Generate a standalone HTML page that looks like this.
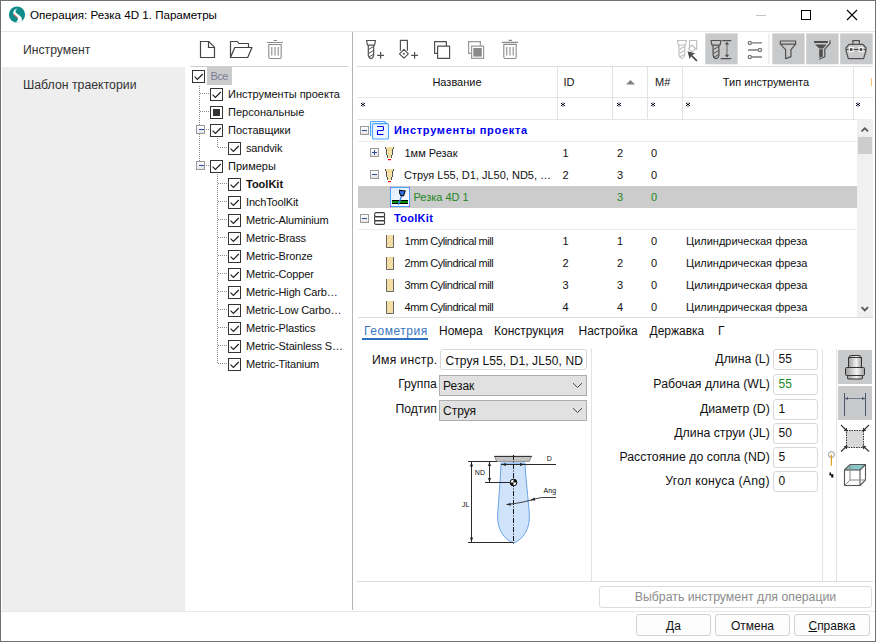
<!DOCTYPE html>
<html><head><meta charset="utf-8">
<style>
*{box-sizing:border-box;margin:0;padding:0}
html,body{width:876px;height:642px;overflow:hidden;background:#fff}
body{position:relative;font-family:"Liberation Sans",sans-serif;color:#000;font-size:11px}
.a{position:absolute}
.t{position:absolute;white-space:nowrap;line-height:1}
.hl{position:absolute;height:1px}
.vl{position:absolute;width:1px}
.cb{width:13px;height:13px;border:1px solid #333;background:#fff}
.dh{height:1px;background-image:linear-gradient(to right,#8a8a8a 50%,transparent 50%);background-size:2px 1px}
.dv{width:1px;background-image:linear-gradient(to bottom,#8a8a8a 50%,transparent 50%);background-size:1px 2px}
.ex{width:9px;height:9px;border:1px solid #9a9a9a;background:linear-gradient(#fff,#e4e4e4)}
</style></head><body>
<!-- window border -->
<div class="a" style="left:0;top:0;width:876px;height:642px;border:1px solid #707070;z-index:50;pointer-events:none"></div>

<!-- title bar -->
<svg class="a" style="left:6px;top:4px" width="22" height="22" viewBox="6 4 22 22">
  <defs><clipPath id="lc"><circle cx="17" cy="14.6" r="8.1"/></clipPath></defs>
  <circle cx="17" cy="14.6" r="8.1" fill="#108c88"/>
  <g clip-path="url(#lc)">
  <path d="M17.6 8.6 C14.6 9.2 12.6 11.4 13.4 13.9 L17.4 17.4 C18.6 18.8 17.6 21.2 14.2 24 L20.5 24 C22.6 21.2 22.6 17.6 19.6 15.4 L16.3 13.1 C15 12 15.2 10.2 17.6 8.6Z" fill="#fff"/>
  <path d="M13.3 13.6 L17.7 17.6 L17.3 18.6 L13.1 14.8Z" fill="#e45a5a"/>
  </g>
</svg>
<div class="t" style="left:30px;top:9px;font-size:11.6px;color:#000">Операция: Резка 4D 1. Параметры</div>
<div class="hl" style="left:1px;top:31px;width:874px;background:#e6e6e6"></div>
<!-- min max close -->
<div class="a" style="left:756px;top:15px;width:10px;height:1px;background:#c4c4c4"></div>
<div class="a" style="left:801px;top:10px;width:10px;height:10px;border:1px solid #000"></div>
<svg class="a" style="left:846px;top:9px" width="12" height="12" viewBox="0 0 12 12"><path d="M1 1L11 11M11 1L1 11" stroke="#000" stroke-width="1.1"/></svg>

<!-- left nav -->
<div class="a" style="left:2px;top:67px;width:183px;height:545px;background:#eeeeee"></div>
<div class="t" style="left:23px;top:44px;font-size:12.2px;color:#333">Инструмент</div>
<div class="t" style="left:23px;top:79px;font-size:12.3px;color:#333">Шаблон траектории</div>

<!-- splitter -->
<div class="vl" style="left:352px;top:32px;height:578px;background:#b4b4b4"></div>
<div class="hl" style="left:1px;top:611px;width:874px;background:#e8e8e8"></div>

<svg class="a" style="left:195px;top:36px" width="95" height="26" viewBox="195 36 95 26">
<path d="M200.5 41.5 H208.8 L214.5 47.2 V57.5 H200.5Z M208.5 41.5 V47.5 H214.5" fill="none" stroke="#444" stroke-width="1.2"/>
<path d="M230.5 57.5 V41.5 H237.3 L238.8 43.5 H248.5 V47.5 M230.5 57.5 L234.8 47.5 H252 L247.7 57.5Z" fill="none" stroke="#444" stroke-width="1.2" stroke-linejoin="round"/>
<path d="M267 42.5 H283 M273.5 40.5 H277 M268.8 44.5 H281.2 V57 Q281.2 58.5 279.8 58.5 H270.2 Q268.8 58.5 268.8 57Z M271.8 47 V55.5 M275 47 V55.5 M278.2 47 V55.5" fill="none" stroke="#8a8a8a" stroke-width="1.1"/>
</svg>
<div class="hl" style="left:190px;top:66px;width:158px;background:#cfcfcf"></div>
<div class="a dv" style="left:199px;top:86px;height:80px"></div>
<div class="a dv" style="left:217px;top:138px;height:10px"></div>
<div class="a dv" style="left:217px;top:174px;height:190px"></div>
<div class="a" style="left:207px;top:67px;width:25px;height:18px;background:#cccccc"></div>
<div class="a cb" style="left:192px;top:70px"><svg width="13" height="13" viewBox="0 0 13 13" style="position:absolute;left:-1px;top:-1px"><path d="M2.6 6.6 L5.4 9.4 L10.8 4" fill="none" stroke="#222" stroke-width="1.2"/></svg></div>
<div class="t" style="left:210.5px;top:71px;color:#7d7d96;letter-spacing:-0.6px">Все</div>
<div class="a dh" style="left:200px;top:93px;width:10px"></div>
<div class="a cb" style="left:210px;top:88px"><svg width="13" height="13" viewBox="0 0 13 13" style="position:absolute;left:-1px;top:-1px"><path d="M2.6 6.6 L5.4 9.4 L10.8 4" fill="none" stroke="#222" stroke-width="1.2"/></svg></div>
<div class="t" style="left:228px;top:89px;color:#111">Инструменты проекта</div>
<div class="a dh" style="left:200px;top:111px;width:10px"></div>
<div class="a cb" style="left:210px;top:106px"><div class="a" style="left:2px;top:2px;width:7px;height:7px;background:#333"></div></div>
<div class="t" style="left:228px;top:107px;color:#111">Персональные</div>
<div class="a dh" style="left:204px;top:129px;width:6px"></div>
<div class="a ex" style="left:196px;top:125px"><div class="a" style="left:2px;top:3px;width:5px;height:1px;background:#2a4cb0"></div></div>
<div class="a cb" style="left:210px;top:124px"><svg width="13" height="13" viewBox="0 0 13 13" style="position:absolute;left:-1px;top:-1px"><path d="M2.6 6.6 L5.4 9.4 L10.8 4" fill="none" stroke="#222" stroke-width="1.2"/></svg></div>
<div class="t" style="left:228px;top:125px;color:#111">Поставщики</div>
<div class="a dh" style="left:218px;top:147px;width:10px"></div>
<div class="a cb" style="left:228px;top:142px"><svg width="13" height="13" viewBox="0 0 13 13" style="position:absolute;left:-1px;top:-1px"><path d="M2.6 6.6 L5.4 9.4 L10.8 4" fill="none" stroke="#222" stroke-width="1.2"/></svg></div>
<div class="t" style="left:246px;top:143px;letter-spacing:-0.15px;color:#111">sandvik</div>
<div class="a dh" style="left:204px;top:165px;width:6px"></div>
<div class="a ex" style="left:196px;top:161px"><div class="a" style="left:2px;top:3px;width:5px;height:1px;background:#2a4cb0"></div></div>
<div class="a cb" style="left:210px;top:160px"><svg width="13" height="13" viewBox="0 0 13 13" style="position:absolute;left:-1px;top:-1px"><path d="M2.6 6.6 L5.4 9.4 L10.8 4" fill="none" stroke="#222" stroke-width="1.2"/></svg></div>
<div class="t" style="left:228px;top:161px;color:#111">Примеры</div>
<div class="a dh" style="left:218px;top:183px;width:10px"></div>
<div class="a cb" style="left:228px;top:178px"><svg width="13" height="13" viewBox="0 0 13 13" style="position:absolute;left:-1px;top:-1px"><path d="M2.6 6.6 L5.4 9.4 L10.8 4" fill="none" stroke="#222" stroke-width="1.2"/></svg></div>
<div class="t" style="left:246px;top:179px;font-weight:bold;color:#111">ToolKit</div>
<div class="a dh" style="left:218px;top:201px;width:10px"></div>
<div class="a cb" style="left:228px;top:196px"><svg width="13" height="13" viewBox="0 0 13 13" style="position:absolute;left:-1px;top:-1px"><path d="M2.6 6.6 L5.4 9.4 L10.8 4" fill="none" stroke="#222" stroke-width="1.2"/></svg></div>
<div class="t" style="left:246px;top:197px;letter-spacing:-0.15px;color:#111">InchToolKit</div>
<div class="a dh" style="left:218px;top:219px;width:10px"></div>
<div class="a cb" style="left:228px;top:214px"><svg width="13" height="13" viewBox="0 0 13 13" style="position:absolute;left:-1px;top:-1px"><path d="M2.6 6.6 L5.4 9.4 L10.8 4" fill="none" stroke="#222" stroke-width="1.2"/></svg></div>
<div class="t" style="left:246px;top:215px;letter-spacing:-0.15px;color:#111">Metric-Aluminium</div>
<div class="a dh" style="left:218px;top:237px;width:10px"></div>
<div class="a cb" style="left:228px;top:232px"><svg width="13" height="13" viewBox="0 0 13 13" style="position:absolute;left:-1px;top:-1px"><path d="M2.6 6.6 L5.4 9.4 L10.8 4" fill="none" stroke="#222" stroke-width="1.2"/></svg></div>
<div class="t" style="left:246px;top:233px;letter-spacing:-0.15px;color:#111">Metric-Brass</div>
<div class="a dh" style="left:218px;top:255px;width:10px"></div>
<div class="a cb" style="left:228px;top:250px"><svg width="13" height="13" viewBox="0 0 13 13" style="position:absolute;left:-1px;top:-1px"><path d="M2.6 6.6 L5.4 9.4 L10.8 4" fill="none" stroke="#222" stroke-width="1.2"/></svg></div>
<div class="t" style="left:246px;top:251px;letter-spacing:-0.15px;color:#111">Metric-Bronze</div>
<div class="a dh" style="left:218px;top:273px;width:10px"></div>
<div class="a cb" style="left:228px;top:268px"><svg width="13" height="13" viewBox="0 0 13 13" style="position:absolute;left:-1px;top:-1px"><path d="M2.6 6.6 L5.4 9.4 L10.8 4" fill="none" stroke="#222" stroke-width="1.2"/></svg></div>
<div class="t" style="left:246px;top:269px;letter-spacing:-0.15px;color:#111">Metric-Copper</div>
<div class="a dh" style="left:218px;top:291px;width:10px"></div>
<div class="a cb" style="left:228px;top:286px"><svg width="13" height="13" viewBox="0 0 13 13" style="position:absolute;left:-1px;top:-1px"><path d="M2.6 6.6 L5.4 9.4 L10.8 4" fill="none" stroke="#222" stroke-width="1.2"/></svg></div>
<div class="t" style="left:246px;top:287px;letter-spacing:-0.15px;color:#111">Metric-High Carb…</div>
<div class="a dh" style="left:218px;top:309px;width:10px"></div>
<div class="a cb" style="left:228px;top:304px"><svg width="13" height="13" viewBox="0 0 13 13" style="position:absolute;left:-1px;top:-1px"><path d="M2.6 6.6 L5.4 9.4 L10.8 4" fill="none" stroke="#222" stroke-width="1.2"/></svg></div>
<div class="t" style="left:246px;top:305px;letter-spacing:-0.15px;color:#111">Metric-Low Carbo…</div>
<div class="a dh" style="left:218px;top:327px;width:10px"></div>
<div class="a cb" style="left:228px;top:322px"><svg width="13" height="13" viewBox="0 0 13 13" style="position:absolute;left:-1px;top:-1px"><path d="M2.6 6.6 L5.4 9.4 L10.8 4" fill="none" stroke="#222" stroke-width="1.2"/></svg></div>
<div class="t" style="left:246px;top:323px;letter-spacing:-0.15px;color:#111">Metric-Plastics</div>
<div class="a dh" style="left:218px;top:345px;width:10px"></div>
<div class="a cb" style="left:228px;top:340px"><svg width="13" height="13" viewBox="0 0 13 13" style="position:absolute;left:-1px;top:-1px"><path d="M2.6 6.6 L5.4 9.4 L10.8 4" fill="none" stroke="#222" stroke-width="1.2"/></svg></div>
<div class="t" style="left:246px;top:341px;letter-spacing:-0.15px;color:#111">Metric-Stainless S…</div>
<div class="a dh" style="left:218px;top:363px;width:10px"></div>
<div class="a cb" style="left:228px;top:358px"><svg width="13" height="13" viewBox="0 0 13 13" style="position:absolute;left:-1px;top:-1px"><path d="M2.6 6.6 L5.4 9.4 L10.8 4" fill="none" stroke="#222" stroke-width="1.2"/></svg></div>
<div class="t" style="left:246px;top:359px;letter-spacing:-0.15px;color:#111">Metric-Titanium</div>
<svg class="a" style="left:355px;top:32px" width="521" height="34" viewBox="355 32 521 34">
<g fill="none" stroke="#505050" stroke-width="1.2" stroke-linejoin="round">
 <path d="M366.5 40.5 H375.5 L374.5 45.2 H367.5Z"/>
 <path d="M368.3 45.2 V55.3 Q368.6 57.5 371 58.7 Q373.4 57.5 373.7 55.3 V45.2"/>
 <path d="M368.5 49.5 L373.5 46.5 M368.5 53.5 L373.5 50.5 M369 57 L373.5 54.2" stroke-width="1"/>
 <path d="M377.2 55.4 H384 M380.6 52 V58.8"/>
 <path d="M400.4 50.8 V40.4 H407.4 V50.8"/>
 <path d="M403.9 49.4 L408.3 53.8 L403.9 58.2 L399.5 53.8Z"/>
 <path d="M411.2 55.4 H418 M414.6 52 V58.8"/>
 <path d="M437.6 53.4 H434.6 V41.6 H446.4 V46.2"/>
 <path d="M437.6 46.2 H449.6 V58.4 H437.6Z"/>
</g>
<circle cx="403.9" cy="53.8" r="1" fill="#505050"/>
<g fill="none" stroke="#9a9a9a" stroke-width="1.2">
 <path d="M471.6 53.4 H468.6 V41.6 H480.4 V46.2"/>
 <path d="M471.6 46.2 H483.6 V58.4 H471.6Z"/>
</g>
<rect x="473.3" y="48" width="8.5" height="8.6" fill="#8a8a8a"/>
<g fill="none" stroke="#8a8a8a" stroke-width="1.1">
 <path d="M502 42.4 H518 M508.5 40.4 H512 M503.8 44.4 H516.2 V57 Q516.2 58.5 514.8 58.5 H505.2 Q503.8 58.5 503.8 57Z M506.8 47 V55.5 M510 47 V55.5 M513.2 47 V55.5"/>
</g>
<!-- icon light mill + insert + cursor -->
<g fill="none" stroke="#bdbdbd" stroke-width="1.1" stroke-linejoin="round">
 <path d="M677.3 40.5 H686.5 L685.5 45 H678.3Z"/>
 <path d="M679 45 V55.3 Q679.3 57.5 681.9 58.6 Q684.5 57.5 684.8 55.3 V45"/>
 <path d="M679.3 49.5 L684.5 46.5 M679.3 53.5 L684.5 50.5 M679.8 57 L684.3 54.5"/>
 <path d="M689.5 47 V40.5 H696.7 V50"/>
 <path d="M692 45 L695.6 48.6 L692 52.2 L688.4 48.6Z"/>
</g>
<path d="M687.5 51.2 L695.3 53.6 L692.2 55 L697.5 60.3 L696.3 61.5 L691 56.2 L689.6 59.2Z" fill="#4a4a4a"/>
<rect x="705.3" y="33.4" width="32.4" height="30.9" fill="#c8c9cb"/>
<g fill="none" stroke="#4f4f4f" stroke-width="1.2" stroke-linejoin="round">
 <path d="M711 40.5 H721 L720 45.2 H712Z"/>
 <path d="M713.1 45.2 V55.3 Q713.4 57.6 716 58.8 Q718.6 57.6 718.9 55.3 V45.2"/>
 <path d="M713.3 49.7 L718.7 46.5 M713.3 53.7 L718.7 50.5 M713.8 57.3 L718.5 54.5" stroke-width="1"/>
 <path d="M722.3 40.6 H731.2 M720.6 58.6 H731.2"/>
</g>
<path d="M727 43 V56.3" stroke="#777" stroke-width="1.2"/>
<path d="M724.8 44.6 L727 41.8 L729.2 44.6Z M724.8 54.7 L727 57.5 L729.2 54.7Z" fill="#4f4f4f"/>
<!-- sliders -->
<g stroke="#7a7a7a" stroke-width="1.3" fill="#fff">
 <path d="M751.5 42.9 H762 M748 50 H758 M751.5 57 H762"/>
 <circle cx="749.8" cy="42.9" r="1.6"/>
 <circle cx="759.9" cy="50" r="1.6"/>
 <circle cx="749.8" cy="57" r="1.6"/>
</g>
<path d="M768.9 34 V64" stroke="#e2e2e2" stroke-width="1"/>
<rect x="772.3" y="33.4" width="32.3" height="30.9" fill="#c8c9cb"/>
<rect x="806.2" y="33.4" width="32.4" height="30.9" fill="#c8c9cb"/>
<rect x="840.2" y="33.4" width="32.5" height="30.9" fill="#c8c9cb"/>
<g fill="none" stroke="#4f4f4f" stroke-width="1.2" stroke-linejoin="round">
 <path d="M780.3 41 H795.6 V44.2 H780.3Z"/>
 <path d="M780.6 44.4 L785.6 49.6 V58.6 L791 56.6 V49.6 L795.4 44.4"/>
 <path d="M830 40.6 V43.4 L824.8 49.2 V56.8 L819.2 59.2"/>
 <path d="M849 44.3 H863 L866 48 V50.8 L863.6 58.6 H848.4 L846 50.8 V48Z"/>
 <path d="M852.8 44 V40.6 H859.4 V44"/>
 <path d="M846 49.5 H866"/>
</g>
<path d="M814 41 H827.8 V42.9 H814Z M815 44.4 H826.6 L823 48.6 H819.4Z M819.2 49.2 H822.8 V56.6 L819.2 57.8Z" fill="#4f4f4f"/>
<rect x="849.3" y="47.6" width="3.8" height="4" fill="#4f4f4f" stroke="#fff" stroke-width="1.1"/>
<rect x="859.1" y="47.6" width="3.8" height="4" fill="#4f4f4f" stroke="#fff" stroke-width="1.1"/>
</svg>
<div class="a" style="left:357px;top:66px;width:516px;height:1px;background:#dcdcdc;"></div>
<div class="a" style="left:557px;top:67px;width:1px;height:52px;background:#e3e3e3;"></div>
<div class="a" style="left:612px;top:67px;width:1px;height:52px;background:#e3e3e3;"></div>
<div class="a" style="left:647px;top:67px;width:1px;height:52px;background:#e3e3e3;"></div>
<div class="a" style="left:682px;top:67px;width:1px;height:52px;background:#e3e3e3;"></div>
<div class="a" style="left:853px;top:67px;width:1px;height:52px;background:#e3e3e3;"></div>
<div class="a" style="left:357px;top:97px;width:516px;height:1px;background:#e6e6e6;"></div>
<div class="a" style="left:357px;top:119px;width:500px;height:1px;background:#e6e6e6;"></div>
<div class="t" style="left:357px;width:200px;text-align:center;top:76.69px;font-size:11px;color:#111;">Название</div>
<div class="t" style="left:563.5px;top:76.69px;font-size:11px;color:#111;">ID</div>
<svg class="a" style="left:625px;top:79px" width="11" height="6" viewBox="0 0 11 6"><path d="M1 5.5 L5.5 1 L10 5.5Z" fill="#808080"/></svg>
<div class="t" style="left:655px;top:76.69px;font-size:11px;color:#111;">M#</div>
<div class="t" style="left:680.5px;width:171.0px;text-align:center;top:76.69px;font-size:11px;color:#111;">Тип инструмента</div>
<div class="a" style="left:871px;top:78px;width:1px;height:8px;background:#f4c070;"></div>
<svg class="a" style="left:360px;top:101px" width="7" height="7" viewBox="0 0 7 7"><rect x="2" y="1" width="2" height="5" fill="#9aa0b0" opacity=".75"/><g fill="#10102a"><rect x="1" y="2" width="1" height="1"/><rect x="4" y="2" width="1" height="1"/><rect x="1" y="4" width="1" height="1"/><rect x="4" y="4" width="1" height="1"/><rect x="2" y="3" width="2" height="1"/></g></svg>
<svg class="a" style="left:560px;top:101px" width="7" height="7" viewBox="0 0 7 7"><rect x="2" y="1" width="2" height="5" fill="#9aa0b0" opacity=".75"/><g fill="#10102a"><rect x="1" y="2" width="1" height="1"/><rect x="4" y="2" width="1" height="1"/><rect x="1" y="4" width="1" height="1"/><rect x="4" y="4" width="1" height="1"/><rect x="2" y="3" width="2" height="1"/></g></svg>
<svg class="a" style="left:616px;top:101px" width="7" height="7" viewBox="0 0 7 7"><rect x="2" y="1" width="2" height="5" fill="#9aa0b0" opacity=".75"/><g fill="#10102a"><rect x="1" y="2" width="1" height="1"/><rect x="4" y="2" width="1" height="1"/><rect x="1" y="4" width="1" height="1"/><rect x="4" y="4" width="1" height="1"/><rect x="2" y="3" width="2" height="1"/></g></svg>
<svg class="a" style="left:650px;top:101px" width="7" height="7" viewBox="0 0 7 7"><rect x="2" y="1" width="2" height="5" fill="#9aa0b0" opacity=".75"/><g fill="#10102a"><rect x="1" y="2" width="1" height="1"/><rect x="4" y="2" width="1" height="1"/><rect x="1" y="4" width="1" height="1"/><rect x="4" y="4" width="1" height="1"/><rect x="2" y="3" width="2" height="1"/></g></svg>
<svg class="a" style="left:685px;top:101px" width="7" height="7" viewBox="0 0 7 7"><rect x="2" y="1" width="2" height="5" fill="#9aa0b0" opacity=".75"/><g fill="#10102a"><rect x="1" y="2" width="1" height="1"/><rect x="4" y="2" width="1" height="1"/><rect x="1" y="4" width="1" height="1"/><rect x="4" y="4" width="1" height="1"/><rect x="2" y="3" width="2" height="1"/></g></svg>
<svg class="a" style="left:855px;top:101px" width="7" height="7" viewBox="0 0 7 7"><rect x="2" y="1" width="2" height="5" fill="#9aa0b0" opacity=".75"/><g fill="#10102a"><rect x="1" y="2" width="1" height="1"/><rect x="4" y="2" width="1" height="1"/><rect x="1" y="4" width="1" height="1"/><rect x="4" y="4" width="1" height="1"/><rect x="2" y="3" width="2" height="1"/></g></svg>
<div class="a" style="left:358px;top:141px;width:499px;height:1px;background:#ebebeb;"></div>
<div class="a" style="left:358px;top:229px;width:499px;height:1px;background:#ebebeb;"></div>
<div class="a ex" style="left:360px;top:126px"><div class="a" style="left:1px;top:3px;width:5px;height:1px;background:#2c4c9c"></div></div>
<svg class="a" style="left:370px;top:121px" width="20" height="19" viewBox="0 0 20 19"><path d="M0.5 15 V1 Q0.5 0.5 1 0.5 H14.5 L17 3" fill="#f2f8ff" stroke="#4aa4ff" stroke-width="1.1"/><rect x="2.5" y="2.6" width="16" height="15.4" rx="1" fill="#eef6ff" stroke="#4aa4ff" stroke-width="1.1"/><path d="M7 5.5 H12.6 Q13.5 5.5 13.5 6.5 V8.6 Q13.5 9.5 12.6 9.5 H8 Q7.5 9.5 7.5 10.5 V13.5 H13.5" fill="none" stroke="#0000e8" stroke-width="1.1"/></svg>
<div class="t" style="left:394px;top:125.19px;font-size:11px;color:#0000f0;font-weight:bold;letter-spacing:0.7px">Инструменты проекта</div>
<div class="a ex" style="left:370px;top:148px"><div class="a" style="left:1px;top:3px;width:5px;height:1px;background:#2c4c9c"></div><div class="a" style="left:3px;top:1px;width:1px;height:5px;background:#2c4c9c"></div></div>
<svg class="a" style="left:385px;top:147px" width="10" height="14" viewBox="0 0 10 14"><g fill="#f7e2a8"><rect x="0" y="0" width="9" height="2"/><rect x="1" y="2" width="7" height="6"/><rect x="2" y="8" width="5" height="3"/></g><path d="M2 1 L5 4 M3 6 L6 9 M4 0 L7 3" stroke="#ead08c" stroke-width="1"/><g fill="#555"><rect x="0" y="0" width="1" height="2"/><rect x="8" y="0" width="1" height="2"/><rect x="1" y="2" width="1" height="6"/><rect x="7" y="2" width="1" height="6"/><rect x="2" y="8" width="1" height="3"/><rect x="6" y="8" width="1" height="3"/></g><rect x="3" y="12" width="3" height="1.2" fill="#ff0000"/></svg>
<div class="t" style="left:404.5px;top:147.69px;font-size:11px;color:#111;">1мм Резак</div>
<div class="t" style="left:562.5px;top:147.69px;font-size:11px;color:#111;">1</div>
<div class="t" style="left:617px;top:147.69px;font-size:11px;color:#111;">2</div>
<div class="t" style="left:651px;top:147.69px;font-size:11px;color:#111;">0</div>
<div class="a ex" style="left:370px;top:170px"><div class="a" style="left:1px;top:3px;width:5px;height:1px;background:#2c4c9c"></div></div>
<svg class="a" style="left:385px;top:169px" width="10" height="14" viewBox="0 0 10 14"><g fill="#f7e2a8"><rect x="0" y="0" width="9" height="2"/><rect x="1" y="2" width="7" height="6"/><rect x="2" y="8" width="5" height="3"/></g><path d="M2 1 L5 4 M3 6 L6 9 M4 0 L7 3" stroke="#ead08c" stroke-width="1"/><g fill="#555"><rect x="0" y="0" width="1" height="2"/><rect x="8" y="0" width="1" height="2"/><rect x="1" y="2" width="1" height="6"/><rect x="7" y="2" width="1" height="6"/><rect x="2" y="8" width="1" height="3"/><rect x="6" y="8" width="1" height="3"/></g><rect x="3" y="12" width="3" height="1.2" fill="#ff0000"/></svg>
<div class="t" style="left:404px;top:169.69px;font-size:11px;color:#111;">Струя L55, D1, JL50, ND5, …</div>
<div class="t" style="left:562.5px;top:169.69px;font-size:11px;color:#111;">2</div>
<div class="t" style="left:617px;top:169.69px;font-size:11px;color:#111;">3</div>
<div class="t" style="left:651px;top:169.69px;font-size:11px;color:#111;">0</div>
<div class="a" style="left:358px;top:186px;width:499px;height:22px;background:#cccccc;"></div>
<svg class="a" style="left:390px;top:187px" width="20" height="20" viewBox="0 0 20 20"><defs><linearGradient id="og" x1="0" y1="0" x2="1" y2="1"><stop offset="0" stop-color="#dcebff"/><stop offset="1" stop-color="#ffffff"/></linearGradient></defs><rect x="0.5" y="0.5" width="19" height="19" fill="url(#og)" stroke="#4aa4ff" stroke-width="1"/><rect x="2" y="13" width="16" height="4" fill="#000"/><rect x="2" y="14" width="16" height="2" fill="#0a8a0a"/><path d="M8.3 17.8 L12 8" stroke="#3a8ef0" stroke-width="1.4"/><path d="M9.6 3.2 L15.2 4 L13.6 8.6 L10.8 8.6 Q9 6.5 9.6 3.2Z" fill="#2a70e8" stroke="#111" stroke-width="1.1"/><rect x="0" y="0" width="1" height="1" fill="#f0f"/><rect x="19" y="0" width="1" height="1" fill="#f0f"/><rect x="0" y="19" width="1" height="1" fill="#f0f"/><rect x="19" y="19" width="1" height="1" fill="#f0f"/></svg>
<div class="t" style="left:413.5px;top:191.69px;font-size:11px;color:#228822;">Резка 4D 1</div>
<div class="t" style="left:617px;top:191.69px;font-size:11px;color:#228822;">3</div>
<div class="t" style="left:651px;top:191.69px;font-size:11px;color:#228822;">0</div>
<div class="a ex" style="left:360px;top:214px"><div class="a" style="left:1px;top:3px;width:5px;height:1px;background:#2c4c9c"></div></div>
<svg class="a" style="left:374px;top:212px" width="12" height="13" viewBox="0 0 12 13"><g fill="none" stroke="#3a3a3a" stroke-width="1.1"><rect x="0.6" y="0.6" width="10" height="4" rx="1.5"/><rect x="0.6" y="4.6" width="10" height="4" rx="0.5"/><rect x="0.6" y="8.6" width="10" height="3.8" rx="1.5"/></g></svg>
<div class="t" style="left:394px;top:213.19px;font-size:11px;color:#0000f0;font-weight:bold;letter-spacing:0.3px">ToolKit</div>
<svg class="a" style="left:386px;top:235px" width="8" height="13" viewBox="0 0 8 13"><rect x="0" y="0" width="8" height="13" fill="#f8e2ab"/><path d="M1 5 L5 0 M1 10 L7 2 M3 12 L7 7" stroke="#efd190" stroke-width="1"/><path d="M0.5 0 V12.5 H7.5 V0" fill="none" stroke="#666" stroke-width="1"/></svg>
<div class="t" style="left:404.5px;top:235.69px;font-size:11px;color:#111;letter-spacing:-0.45px">1mm Cylindrical mill</div>
<div class="t" style="left:562.5px;top:235.69px;font-size:11px;color:#111;">1</div>
<div class="t" style="left:617px;top:235.69px;font-size:11px;color:#111;">1</div>
<div class="t" style="left:651px;top:235.69px;font-size:11px;color:#111;">0</div>
<div class="t" style="left:686px;top:235.69px;font-size:11px;color:#111;">Цилиндрическая фреза</div>
<svg class="a" style="left:386px;top:257px" width="8" height="13" viewBox="0 0 8 13"><rect x="0" y="0" width="8" height="13" fill="#f8e2ab"/><path d="M1 5 L5 0 M1 10 L7 2 M3 12 L7 7" stroke="#efd190" stroke-width="1"/><path d="M0.5 0 V12.5 H7.5 V0" fill="none" stroke="#666" stroke-width="1"/></svg>
<div class="t" style="left:404.5px;top:257.69px;font-size:11px;color:#111;letter-spacing:-0.45px">2mm Cylindrical mill</div>
<div class="t" style="left:562.5px;top:257.69px;font-size:11px;color:#111;">2</div>
<div class="t" style="left:617px;top:257.69px;font-size:11px;color:#111;">2</div>
<div class="t" style="left:651px;top:257.69px;font-size:11px;color:#111;">0</div>
<div class="t" style="left:686px;top:257.69px;font-size:11px;color:#111;">Цилиндрическая фреза</div>
<svg class="a" style="left:386px;top:279px" width="8" height="13" viewBox="0 0 8 13"><rect x="0" y="0" width="8" height="13" fill="#f8e2ab"/><path d="M1 5 L5 0 M1 10 L7 2 M3 12 L7 7" stroke="#efd190" stroke-width="1"/><path d="M0.5 0 V12.5 H7.5 V0" fill="none" stroke="#666" stroke-width="1"/></svg>
<div class="t" style="left:404.5px;top:279.69px;font-size:11px;color:#111;letter-spacing:-0.45px">3mm Cylindrical mill</div>
<div class="t" style="left:562.5px;top:279.69px;font-size:11px;color:#111;">3</div>
<div class="t" style="left:617px;top:279.69px;font-size:11px;color:#111;">3</div>
<div class="t" style="left:651px;top:279.69px;font-size:11px;color:#111;">0</div>
<div class="t" style="left:686px;top:279.69px;font-size:11px;color:#111;">Цилиндрическая фреза</div>
<svg class="a" style="left:386px;top:301px" width="8" height="13" viewBox="0 0 8 13"><rect x="0" y="0" width="8" height="13" fill="#f8e2ab"/><path d="M1 5 L5 0 M1 10 L7 2 M3 12 L7 7" stroke="#efd190" stroke-width="1"/><path d="M0.5 0 V12.5 H7.5 V0" fill="none" stroke="#666" stroke-width="1"/></svg>
<div class="t" style="left:404.5px;top:301.69px;font-size:11px;color:#111;letter-spacing:-0.45px">4mm Cylindrical mill</div>
<div class="t" style="left:562.5px;top:301.69px;font-size:11px;color:#111;">4</div>
<div class="t" style="left:617px;top:301.69px;font-size:11px;color:#111;">4</div>
<div class="t" style="left:651px;top:301.69px;font-size:11px;color:#111;">0</div>
<div class="t" style="left:686px;top:301.69px;font-size:11px;color:#111;">Цилиндрическая фреза</div>
<div class="a" style="left:358px;top:317px;width:515px;height:1px;background:#dcdcdc;"></div>
<div class="a" style="left:857px;top:119px;width:16px;height:198px;background:#f0f0f0;"></div>
<div class="a" style="left:858px;top:137px;width:14px;height:17px;background:#cdcdcd;"></div>
<svg class="a" style="left:857px;top:119px" width="16" height="198" viewBox="0 0 16 198"><path d="M4.6 12.4 L7.8 9.2 L11 12.4 M4.6 188.2 L7.8 191.4 L11 188.2" fill="none" stroke="#555" stroke-width="1.8"/></svg>
<div class="t" style="left:364px;top:325.44px;font-size:12px;color:#3a78c0;letter-spacing:0.55px">Геометрия</div>
<div class="a" style="left:362px;top:338px;width:66px;height:2px;background:#2a70c0;"></div>
<div class="t" style="left:439px;top:325.44px;font-size:12px;color:#111;">Номера</div>
<div class="t" style="left:494px;top:325.44px;font-size:12px;color:#111;">Конструкция</div>
<div class="t" style="left:578.5px;top:325.44px;font-size:12px;color:#111;">Настройка</div>
<div class="t" style="left:649.5px;top:325.44px;font-size:12px;color:#111;">Державка</div>
<div class="t" style="left:718px;top:325.44px;font-size:12px;color:#111;">Г</div>
<div class="t" style="right:438.5px;top:354.37px;font-size:12.2px;color:#111;letter-spacing:0.3px">Имя инстр.</div>
<div class="t" style="right:439.2px;top:378.37px;font-size:12.2px;color:#111;">Группа</div>
<div class="t" style="right:439.2px;top:402.57px;font-size:12.2px;color:#111;">Подтип</div>
<div class="a" style="left:440px;top:349px;width:147px;height:21px;border:1px solid #d9d9d9;border-radius:3px;background:#fff"><div class="t" style="left:4.5px;top:5.3px;font-size:12px;color:#111;letter-spacing:0.1px">Струя L55, D1, JL50, ND</div></div>
<div class="a" style="left:439px;top:375px;width:148px;height:21px;border:1px solid #adadad;background:#e1e1e1"></div>
<div class="t" style="left:443px;top:379.84px;font-size:12px;color:#111;">Резак</div>
<svg class="a" style="left:572px;top:382px" width="11" height="7" viewBox="0 0 11 7"><path d="M1 1.2 L5.5 5.5 L10 1.2" fill="none" stroke="#444" stroke-width="1"/></svg>
<div class="a" style="left:439px;top:400px;width:148px;height:21px;border:1px solid #adadad;background:#e1e1e1"></div>
<div class="t" style="left:443px;top:404.84px;font-size:12px;color:#111;">Струя</div>
<svg class="a" style="left:572px;top:407px" width="11" height="7" viewBox="0 0 11 7"><path d="M1 1.2 L5.5 5.5 L10 1.2" fill="none" stroke="#444" stroke-width="1"/></svg>
<div class="a" style="left:591px;top:348px;width:1px;height:233px;background:#e3e3e3;"></div>
<div class="a" style="left:357px;top:581px;width:516px;height:1px;background:#dcdcdc;"></div>
<svg class="a" style="left:455px;top:450px" width="110" height="100" viewBox="455 450 110 100">
<path d="M501 463 H525 C525.6 478 528.4 500 529.3 514 C530.2 528 524 539 513.5 543 C503 539 496.8 528 497.7 514 C498.6 500 500.6 478 501 463Z" fill="#cfe3fa" stroke="#5a9ae6" stroke-width="0.9"/>
<path d="M494.5 456.2 H531.7 L529.3 461.4 H496.6Z" fill="#c4c4c4" stroke="#707070" stroke-width="0.7"/>
<path d="M494.3 456.5 H531.7" stroke="#333" stroke-width="1"/>
<g stroke="#2a2a2a" stroke-width="1" fill="none">
 <path d="M468 461.5 H497"/>
 <path d="M501 464.5 H556"/>
 <path d="M471.5 461.5 V542.5"/>
 <path d="M468 542.5 H513"/>
 <path d="M489.5 461.5 V482.5"/>
 <path d="M485 482.5 H510"/>
 <path d="M513.5 455 V545" stroke-dasharray="5 1.5 1 1.5" stroke="#111"/>
 <path d="M506.5 504.5 C518 503.5 528 501 533 499.5 L541.3 497.5 H556" stroke-width="0.9"/>
</g>
<g fill="#222">
 <path d="M471.5 461.8 L470 466.5 H473Z M471.5 542.2 L470 537.5 H473Z"/>
 <path d="M489.5 461.8 L488 466 H491Z M489.5 482.2 L488 478 H491Z"/>
 <path d="M501.5 464.5 L506 463 V466Z M524.5 464.5 L520 463 V466Z"/>
 <path d="M506.5 504.6 L510.5 503 L510.8 505.8Z M530 500.3 L534.6 497.6 L535.3 500.4Z"/>
</g>
<circle cx="513.5" cy="482.5" r="3.4" fill="#fff" stroke="#111" stroke-width="1"/>
<path d="M513.5 482.5 V479.1 A3.4 3.4 0 0 1 516.9 482.5Z M513.5 482.5 V485.9 A3.4 3.4 0 0 1 510.1 482.5Z" fill="#111"/>
<g font-family="Liberation Sans" font-size="7" fill="#111">
<text x="474.8" y="475" textLength="10.2" lengthAdjust="spacing">ND</text>
<text x="462" y="507">JL</text>
<text x="546.8" y="461">D</text>
<text x="543.6" y="493.3">Ang</text>
</g>
</svg>
<div class="t" style="right:106.20000000000005px;top:352.79px;font-size:12.3px;color:#111;">Длина (L)</div>
<div class="a" style="left:773px;top:349px;width:45px;height:21px;border:1px solid #d9d9d9;border-radius:3px;background:#fff"></div>
<div class="t" style="left:778.5px;top:353.34px;font-size:12px;color:#111;">55</div>
<div class="t" style="right:106.20000000000005px;top:377.79px;font-size:12.3px;color:#111;">Рабочая длина (WL)</div>
<div class="a" style="left:773px;top:374px;width:45px;height:21px;border:1px solid #d9d9d9;border-radius:3px;background:#fff"></div>
<div class="t" style="left:778.5px;top:378.34px;font-size:12px;color:#1a8a1a;">55</div>
<div class="t" style="right:106.20000000000005px;top:402.79px;font-size:12.3px;color:#111;">Диаметр (D)</div>
<div class="a" style="left:773px;top:399px;width:45px;height:21px;border:1px solid #d9d9d9;border-radius:3px;background:#fff"></div>
<div class="t" style="left:778.5px;top:403.34px;font-size:12px;color:#111;">1</div>
<div class="t" style="right:106.20000000000005px;top:426.79px;font-size:12.3px;color:#111;">Длина струи (JL)</div>
<div class="a" style="left:773px;top:423px;width:45px;height:21px;border:1px solid #d9d9d9;border-radius:3px;background:#fff"></div>
<div class="t" style="left:778.5px;top:427.34px;font-size:12px;color:#111;">50</div>
<div class="t" style="right:106.20000000000005px;top:450.79px;font-size:12.3px;color:#111;">Расстояние до сопла (ND)</div>
<div class="a" style="left:773px;top:447px;width:45px;height:21px;border:1px solid #d9d9d9;border-radius:3px;background:#fff"></div>
<div class="t" style="left:778.5px;top:451.34px;font-size:12px;color:#111;">5</div>
<div class="t" style="right:106.20000000000005px;top:474.79px;font-size:12.3px;color:#111;letter-spacing:0.25px">Угол конуса (Ang)</div>
<div class="a" style="left:773px;top:471px;width:45px;height:21px;border:1px solid #d9d9d9;border-radius:3px;background:#fff"></div>
<div class="t" style="left:778.5px;top:475.34px;font-size:12px;color:#111;">0</div>
<div class="a" style="left:822px;top:349px;width:1px;height:232px;background:#e3e3e3;"></div>
<div class="a" style="left:836px;top:349px;width:1px;height:232px;background:#e3e3e3;"></div>
<div class="a" style="left:838px;top:350px;width:34px;height:34px;background:#c8c9cb;"></div>
<div class="a" style="left:838px;top:386px;width:34px;height:34px;background:#c8c9cb;"></div>
<svg class="a" style="left:836px;top:348px" width="40" height="145" viewBox="836 348 40 145">
<defs><linearGradient id="mg" x1="0" y1="0" x2="1" y2="0"><stop offset="0" stop-color="#9a9a9a"/><stop offset="0.6" stop-color="#f4f4f4"/><stop offset="1" stop-color="#a0a0a0"/></linearGradient></defs>
<g stroke="#333" stroke-width="1" fill="url(#mg)">
 <rect x="849.5" y="355.5" width="11" height="2.5" rx="1"/>
 <rect x="848.5" y="357.5" width="13" height="10"/>
 <rect x="845.5" y="367.5" width="19" height="8" rx="1"/>
 <rect x="847.5" y="375.5" width="15" height="3.5" rx="1"/>
</g>
<g stroke="#4a5670" stroke-width="1" fill="none">
 <path d="M844.5 393 V416 M865.5 393 V416"/><path d="M844.5 398.5 H865.5" stroke-width="0.9" stroke="#6a7488"/>
</g>
<path d="M845 398.5 L848 397 V400Z M865 398.5 L862 397 V400Z" fill="#4a5670"/>
<rect x="846.5" y="430.5" width="17" height="17" fill="#d8d8d8"/><rect x="846.5" y="430.5" width="17" height="17" fill="none" stroke="#333" stroke-width="1" stroke-dasharray="1.5 1"/>
<g stroke="#333" stroke-width="1.1">
 <path d="M841 425 L847 431 M869 425 L863 431 M841 451.5 L847 446 M869 451.5 L863 446"/>
</g>
<g fill="#333">
 <path d="M847.5 431.5 L843.6 430.8 L846.8 427.6Z M862.5 431.5 L866.4 430.8 L863.2 427.6Z M847.5 445.5 L843.6 446.2 L846.8 449.4Z M862.5 445.5 L866.4 446.2 L863.2 449.4Z"/>
</g>
<path d="M850 464.5 H865.5 L860 470 H844.5Z" fill="#8ac6c6"/>
<g stroke="#555" stroke-width="1.1" fill="none">
 <rect x="844.5" y="470" width="15.5" height="15.5"/>
 <path d="M844.5 470 L850 464.5 H865.5 V480 L860 485.5 M865.5 464.5 L860 470"/>
</g>
<g stroke="#888" stroke-width="1" fill="none"><path d="M850 464.5 V480 H865.5 M850 480 L844.5 485.5"/></g>
</svg>
<svg class="a" style="left:826px;top:450px" width="10" height="30" viewBox="826 450 10 30">
<circle cx="831.4" cy="454.6" r="3" fill="none" stroke="#777" stroke-width="0.8"/>
<path d="M831.4 454.5 V465.8" stroke="#e0a020" stroke-width="1.2"/>
<path d="M829.5 472.5 H831 V474.3 H833.3 V477.5 H831.3 V475.5 H829.5Z" fill="#000"/>
</svg>
<div class="a" style="left:599px;top:586px;width:273px;height:22px;border:1px solid #dcdcdc;border-radius:3px;background:#fff"></div>
<div class="t" style="left:599px;width:273px;text-align:center;top:591.39px;font-size:12.3px;color:#8c8c8c;">Выбрать инструмент для операции</div>
<div class="a" style="left:636px;top:614px;width:75px;height:22px;border:1px solid #d0d0d0;border-radius:3px;background:#fdfdfd"></div>
<div class="t" style="left:636px;width:75px;text-align:center;top:620.34px;font-size:12px;color:#111;"><u>Д</u>а</div>
<div class="a" style="left:715px;top:614px;width:75px;height:22px;border:1px solid #d0d0d0;border-radius:3px;background:#fdfdfd"></div>
<div class="t" style="left:715px;width:75px;text-align:center;top:620.34px;font-size:12px;color:#111;">Отмена</div>
<div class="a" style="left:794px;top:614px;width:76px;height:22px;border:1px solid #d0d0d0;border-radius:3px;background:#fdfdfd"></div>
<div class="t" style="left:794px;width:76px;text-align:center;top:620.34px;font-size:12px;color:#111;"><u>С</u>правка</div>
</body></html>
